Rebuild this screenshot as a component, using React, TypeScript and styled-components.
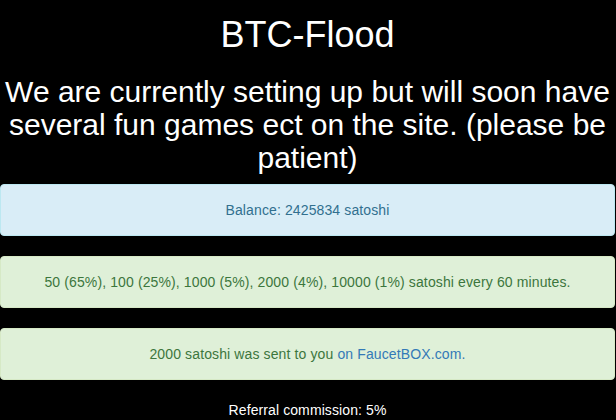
import React from 'react';
import styled, { createGlobalStyle } from 'styled-components';

const GlobalStyle = createGlobalStyle`
    html, body {
        margin: 0;
        padding: 0;
        background: #000;
    }
    body {
        font-family: "Liberation Sans", Arial, Helvetica, sans-serif;
        font-size: 14px;
        line-height: 20px;
        color: #fff;
    }
`

const Page = styled.div`
    width: 615px;
    text-align: center;
    padding-top: 1px;
`

const Title = styled.h1`
    font-size: 36px;
    font-weight: 400;
    line-height: 1.1;
    margin: 14px 0 10px;
    color: #fff;
`

const Subtitle = styled.h2`
    font-size: 30px;
    font-weight: 400;
    line-height: 1.1;
    margin: 20px 0 10px;
    color: #fff;
`

const Alert = styled.div<{ $kind: 'info' | 'success' }>`
    padding: 15px;
    margin-bottom: 20px;
    border: 1px solid ${(p) => (p.$kind === 'info' ? '#bce8f1' : '#d6e9c6')};
    border-radius: 4px;
    background: ${(p) => (p.$kind === 'info' ? '#d9edf7' : '#dff0d8')};
    color: ${(p) => (p.$kind === 'info' ? '#31708f' : '#3c763d')};
    letter-spacing: 0.12px;
`

const AlertLink = styled.a`
    color: #337ab7;
    text-decoration: none;
`

const Referral = styled.p`
    margin: 0;
    color: #fff;
    letter-spacing: 0.1px;
`

function App() {
    return (
        <>
            <GlobalStyle />
            <Page>
                <Title>BTC-Flood</Title>
                <Subtitle>
                    We are currently setting up but will soon have several fun games ect on the site. (please be patient)
                </Subtitle>
                <Alert $kind="info">Balance: 2425834 satoshi</Alert>
                <Alert $kind="success">
                    50 (65%), 100 (25%), 1000 (5%), 2000 (4%), 10000 (1%) satoshi every 60 minutes.
                </Alert>
                <Alert $kind="success">
                    2000 satoshi was sent to you <AlertLink href="#">on FaucetBOX.com.</AlertLink>
                </Alert>
                <Referral>Referral commission: 5%</Referral>
            </Page>
        </>
    );
}

export default App;
